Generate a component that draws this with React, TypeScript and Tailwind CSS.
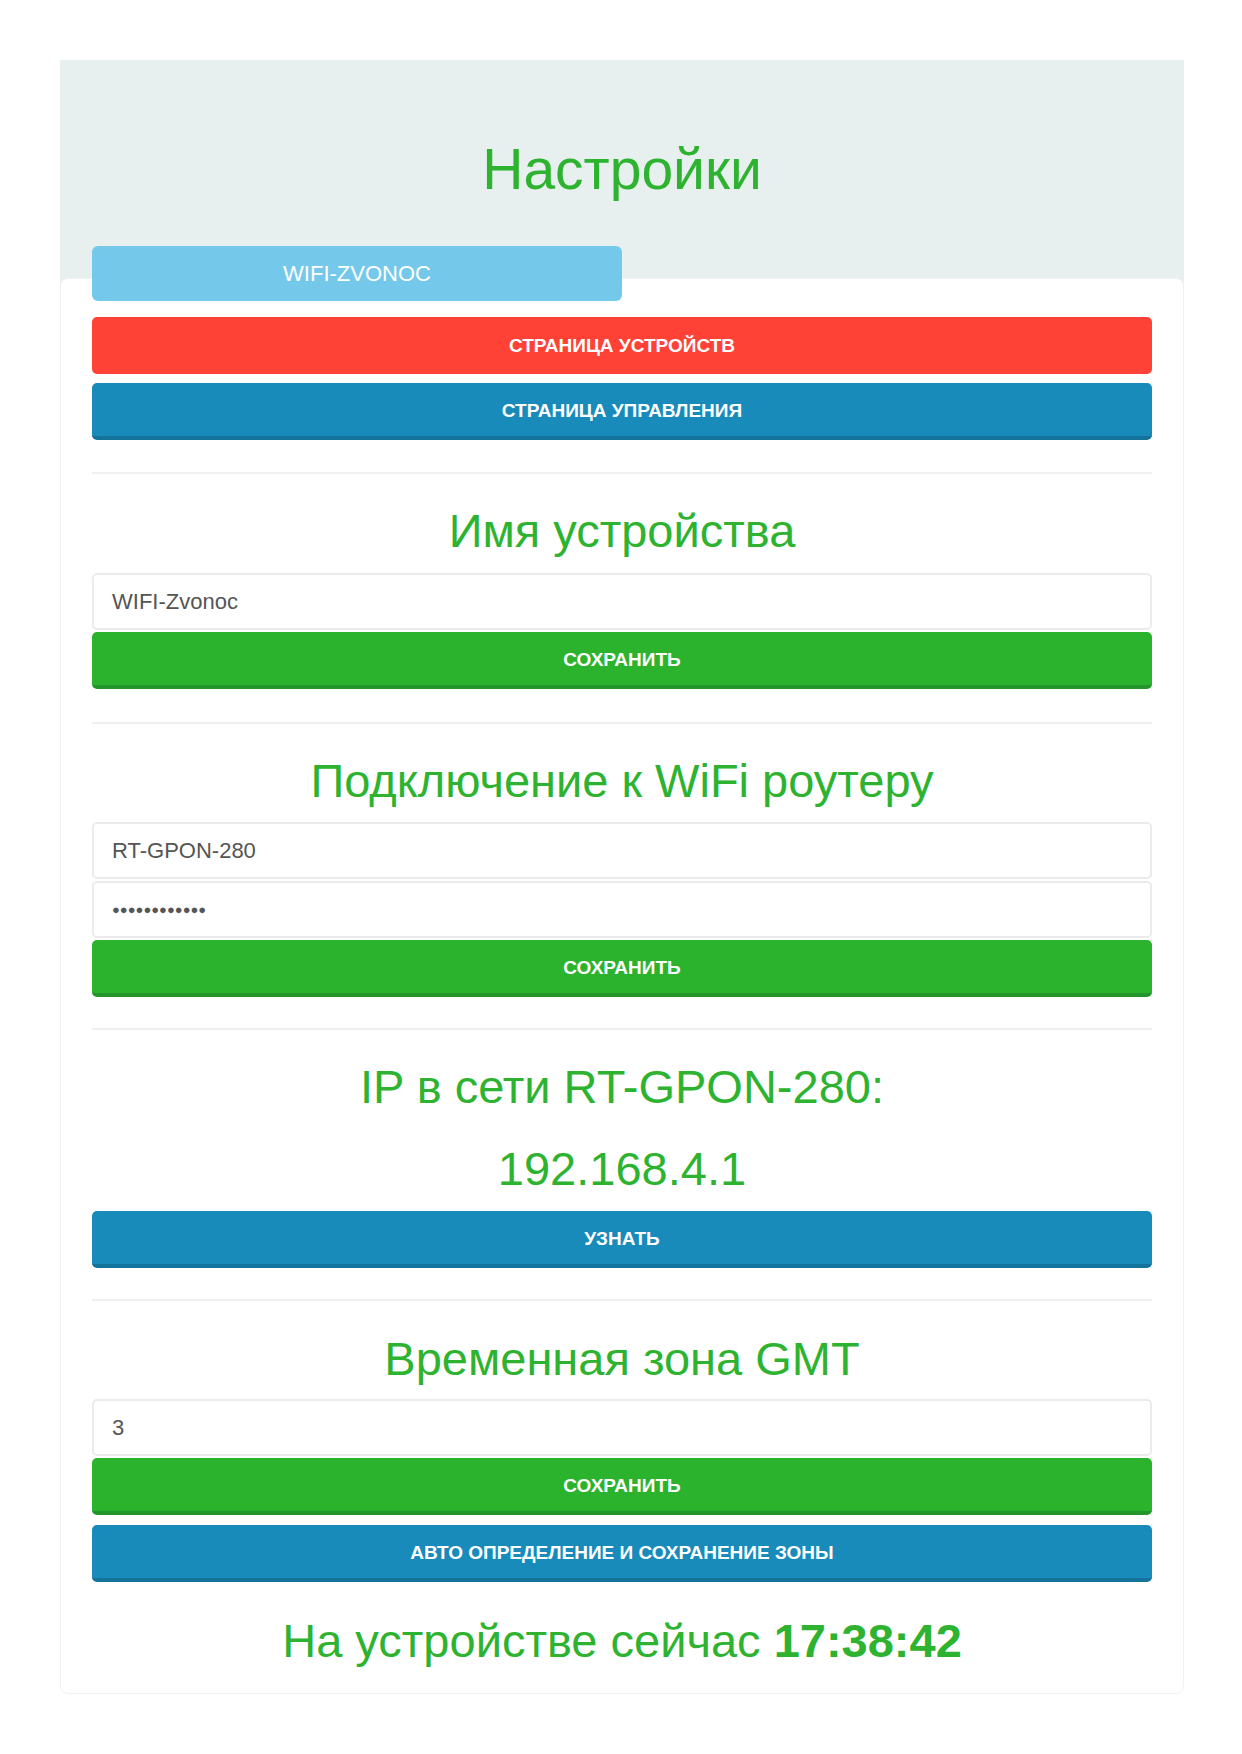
import React from "react";

const GREEN_TEXT = "text-[#2db32f]";

function Btn({ color, children }: { color: "red" | "blue" | "green"; children: React.ReactNode }) {
  const cls =
    color === "red"
      ? "bg-[#ff4136] border-b-[3px] border-[#ff4136]"
      : color === "blue"
      ? "bg-[#188bba] border-b-[4px] border-[#13739b]"
      : "bg-[#2bb32d] border-b-[4px] border-[#23952a]";
  return (
    <div
      className={`${cls} h-[57px] pt-[4px] rounded-[5px] flex items-center justify-center text-white font-bold text-[19px] uppercase`}
    >
      {children}
    </div>
  );
}

function Field({ children }: { children: React.ReactNode }) {
  return (
    <div className="h-[57px] rounded-[5px] border-2 border-[#ebebeb] bg-white flex items-center pl-[18px] text-[22px] text-[#555555]">
      {children}
    </div>
  );
}

function Heading({ children, className = "" }: { children: React.ReactNode; className?: string }) {
  return (
    <div className={`text-center text-[47px] leading-[53px] ${GREEN_TEXT} ${className}`}>{children}</div>
  );
}

function Hr({ className = "" }: { className?: string }) {
  return <div className={`h-[2px] bg-[#f0f0f0] ${className}`} />;
}

export default function App() {
  return (
    <div
      className="min-h-screen bg-white pt-[60px] pl-[60px] pr-[58px] pb-[59px]"
      style={{ fontFamily: '"Liberation Sans", Arial, sans-serif' }}
    >
      <div className="bg-[#e8f0ef] pt-[77px]">
        <div className={`text-center text-[57px] leading-[65px] ${GREEN_TEXT}`}>Настройки</div>
        <div className="relative z-10 ml-[32px] mt-[44px] -mb-[23px] w-[530px] h-[55px] rounded-[6px] bg-[#74c9ea] flex items-center justify-center text-white text-[22px]">
          WIFI-ZVONOC
        </div>
      </div>
      <div className="bg-white rounded-[8px] border border-[#f2f2f2] px-[31px] pt-[38px] pb-[26px]">
        <Btn color="red">Страница устройств</Btn>
        <div className="mt-[9px]">
          <Btn color="blue">Страница управления</Btn>
        </div>

        <Hr className="mt-[32px]" />
        <Heading className="mt-[30px]">Имя устройства</Heading>
        <div className="mt-[16px]">
          <Field>WIFI-Zvonoc</Field>
        </div>
        <div className="mt-[2px]">
          <Btn color="green">Сохранить</Btn>
        </div>

        <Hr className="mt-[33px]" />
        <Heading className="mt-[30px]">Подключение к WiFi роутеру</Heading>
        <div className="mt-[15px]">
          <Field>RT-GPON-280</Field>
        </div>
        <div className="mt-[2px]">
          <Field>
            <span className="text-[13px]">●●●●●●●●●●●●</span>
          </Field>
        </div>
        <div className="mt-[2px]">
          <Btn color="green">Сохранить</Btn>
        </div>

        <Hr className="mt-[31px]" />
        <Heading className="mt-[30px]">IP в сети RT-GPON-280:</Heading>
        <Heading className="mt-[29px]">192.168.4.1</Heading>
        <div className="mt-[16px]">
          <Btn color="blue">Узнать</Btn>
        </div>

        <Hr className="mt-[31px]" />
        <Heading className="mt-[31px]">Временная зона GMT</Heading>
        <div className="mt-[14px]">
          <Field>3</Field>
        </div>
        <div className="mt-[2px]">
          <Btn color="green">Сохранить</Btn>
        </div>
        <div className="mt-[10px]">
          <Btn color="blue">Авто определение и сохранение зоны</Btn>
        </div>

        <Heading className="mt-[32px]">
          На устройстве сейчас <span className="font-bold">17:38:42</span>
        </Heading>
      </div>
    </div>
  );
}
